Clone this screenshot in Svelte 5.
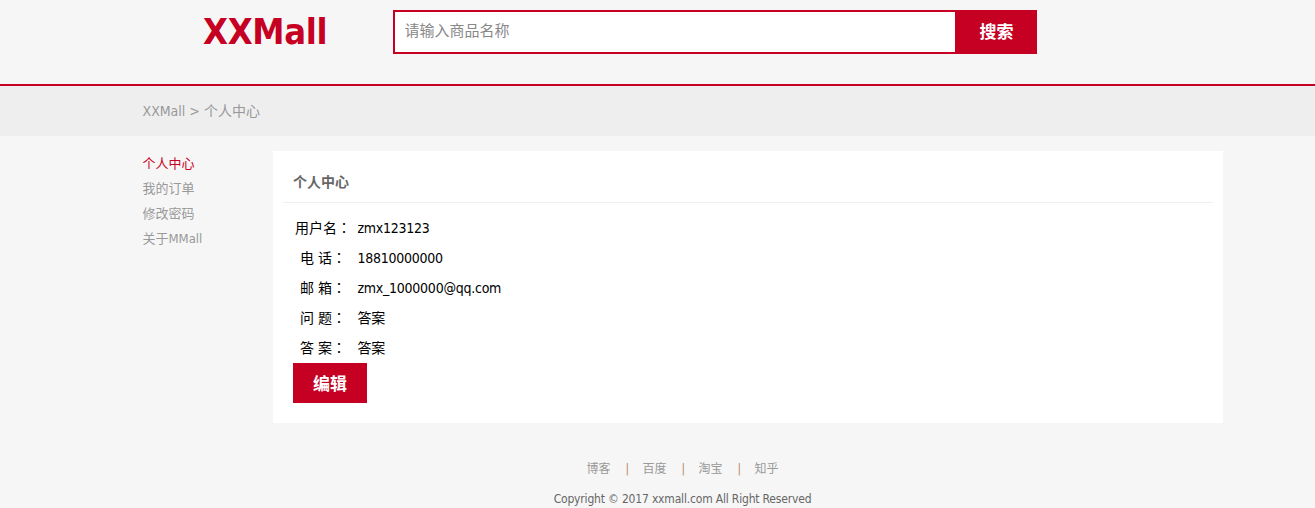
<script>
	const sideLinks = ['个人中心', '我的订单', '修改密码', '关于MMall']
	const info = [
		{ label: '用户名', value: 'zmx123123' },
		{ label: '电 话', value: '18810000000' },
		{ label: '邮 箱', value: 'zmx_1000000@qq.com' },
		{ label: '问 题', value: '答案' },
		{ label: '答 案', value: '答案' }
	]
	const footLinks = ['博客', '百度', '淘宝', '知乎']
</script>

<header class="header">
	<div class="logo">XXMall</div>
	<div class="search">
		<input class="search-input" placeholder="请输入商品名称" />
		<button class="search-btn">搜索</button>
	</div>
</header>

<div class="crumb">
	<div class="wrap">XXMall &gt; 个人中心</div>
</div>

<div class="wrap main">
	<ul class="side">
		{#each sideLinks as link, i}
			<li class:active={i === 0}>{link}</li>
		{/each}
	</ul>
	<div class="panel">
		<div class="panel-title">个人中心</div>
		<div class="panel-body">
			{#each info as row}
				<div class="row">
					<span class="label">{row.label}<span class="colon">：</span></span>
					<span class="value">{row.value}</span>
				</div>
			{/each}
			<button class="edit">编辑</button>
		</div>
	</div>
</div>

<footer class="wrap footer">
	<div class="links">
		{#each footLinks as link, i}
			{#if i > 0}<span class="sep">|</span>{/if}
			<span>{link}</span>
		{/each}
	</div>
	<div class="copy">Copyright © 2017 xxmall.com All Right Reserved</div>
</footer>

<style>
	:global(body) {
		background: #f6f6f6;
		font-family: "DejaVu Sans", "Noto Sans CJK SC", sans-serif;
		font-stretch: condensed;
		font-size: 14px;
		overflow: hidden;
	}

	.header {
		display: flex;
		height: 84px;
		border-bottom: 2px solid #c60023;
		padding-left: 203px;
	}

	.logo {
		width: 190px;
		margin-top: 10px;
		height: 44px;
		line-height: 44px;
		font-size: 36px;
		font-weight: bold;
		letter-spacing: -0.35px;
		color: #c60023;
	}

	.search {
		display: flex;
		margin-top: 10px;
		height: 44px;
	}

	.search-input {
		box-sizing: border-box;
		width: 562px;
		height: 44px;
		border: 2px solid #c60023;
		border-right: 0;
		padding: 0 10px 3px 9.5px;
		outline: none;
		background: #fff;
		font: inherit;
		font-size: 15px;
	}

	.search-input::placeholder {
		color: #888;
	}

	.search-btn {
		width: 82px;
		height: 44px;
		border: 0;
		padding: 0 0 3px 1px;
		background: #c60023;
		color: #fff;
		font: inherit;
		font-size: 17px;
		font-weight: bold;
	}

	.crumb {
		height: 50px;
		line-height: 50px;
		background: #eee;
		color: #999;
	}

	.wrap {
		margin-left: 142.5px;
		width: 1080px;
	}

	.main {
		display: flex;
		margin-top: 15px;
	}

	.side {
		width: 130.5px;
		margin: 0;
		padding: 0;
		list-style: none;
		font-size: 13px;
		color: #999;
	}

	.side li {
		height: 25px;
		line-height: 25px;
	}

	.side .active {
		color: #c60023;
	}

	.panel {
		box-sizing: border-box;
		width: 950px;
		height: 272px;
		padding: 10px;
		background: #fff;
	}

	.panel-title {
		height: 41px;
		line-height: 43px;
		padding-left: 10px;
		border-bottom: 1px solid #eee;
		font-weight: bold;
		color: #666;
	}

	.panel-body {
		padding: 10px 10px 0;
	}

	.row {
		display: flex;
		height: 30px;
		line-height: 30px;
		color: #000;
	}

	.label {
		width: 60px;
		margin-top: -1px;
		margin-right: 4.5px;
		text-align: center;
		white-space: nowrap;
	}

	.colon {
		font-family: "Noto Sans CJK TC", sans-serif;
	}

	.value {
		letter-spacing: -0.25px;
	}

	.edit {
		display: block;
		width: 74px;
		height: 40px;
		border: 0;
		padding: 0 0 1px;
		background: #c60023;
		color: #fff;
		font: inherit;
		font-size: 17px;
		font-weight: bold;
	}

	.footer {
		margin-top: 31px;
		text-align: center;
		color: #666;
	}

	.links {
		display: flex;
		justify-content: center;
		gap: 15px;
		height: 30px;
		line-height: 30px;
		font-size: 12px;
		color: #999;
	}

	.sep {
		width: 2px;
		color: #b48a5a;
	}

	.copy {
		height: 30px;
		line-height: 30px;
		font-size: 12px;
		letter-spacing: -0.18px;
	}
</style>
